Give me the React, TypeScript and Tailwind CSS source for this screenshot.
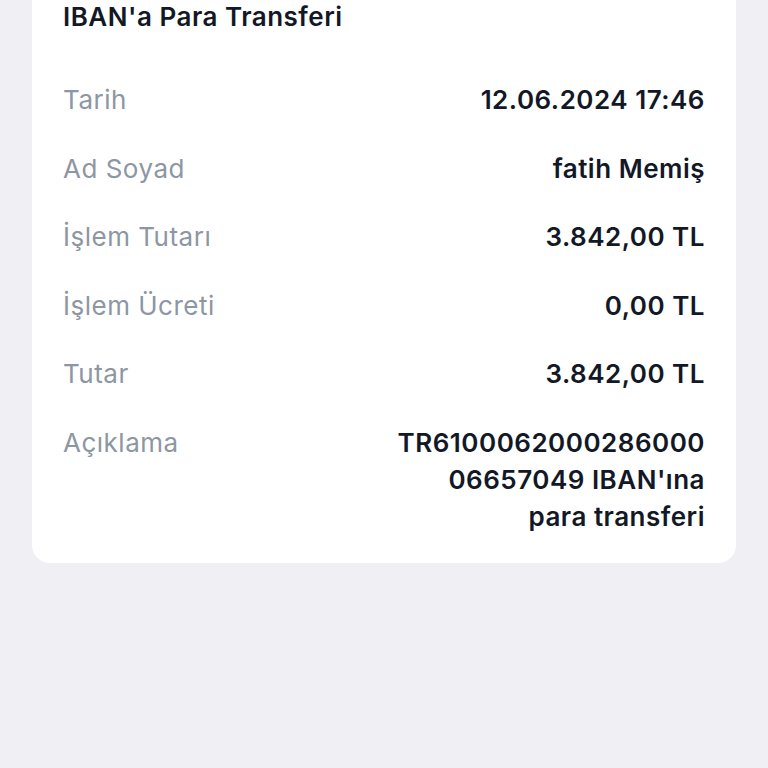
const rows = [
  { label: 'Tarih', value: ['12.06.2024 17:46'] },
  { label: 'Ad Soyad', value: ['fatih Memiş'] },
  { label: 'İşlem Tutarı', value: ['3.842,00 TL'] },
  { label: 'İşlem Ücreti', value: ['0,00 TL'] },
  { label: 'Tutar', value: ['3.842,00 TL'] },
  { label: 'Açıklama', value: ['TR6100062000286000', "06657049 IBAN'ına", 'para transferi'] },
];

export default function App() {
  return (
    <div
      className="min-h-[768px] w-full overflow-hidden bg-[#efeff4]"
      style={{ fontFamily: 'Inter, "Noto Sans", sans-serif' }}
    >
      <div className="mx-8 -mt-[40px] rounded-[18px] bg-white px-[31px] pt-[38px] pb-[28px]">
        <h1 className="text-[26px] leading-[37px] font-semibold tracking-[0.5px] text-[#121826]">IBAN'a Para Transferi</h1>
        <div className="mt-[46px] flex flex-col gap-[31.6px]">
          {rows.map(row => (
            <div key={row.label} className="flex items-start justify-between">
              <span className="text-[26px] leading-[37px] tracking-[0.5px] text-[#8d96a3]">{row.label}</span>
              <div className="text-right text-[26px] leading-[37px] font-semibold tracking-[0.5px] text-[#121826]">
                {row.value.map(line => (
                  <div key={line}>{line}</div>
                ))}
              </div>
            </div>
          ))}
        </div>
      </div>
    </div>
  );
}
